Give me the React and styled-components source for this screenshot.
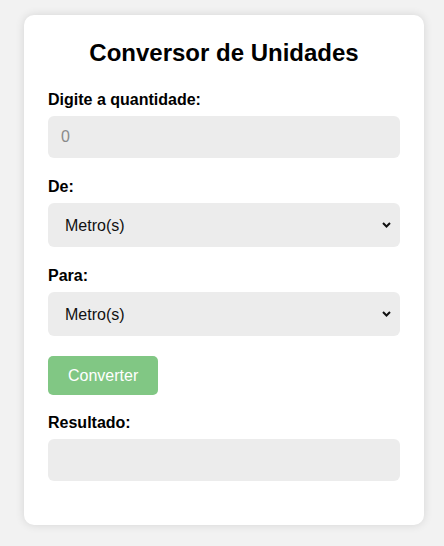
import React, { useState } from "react";
import styled, { createGlobalStyle } from "styled-components";

const GlobalStyle = createGlobalStyle`
	body {
		margin: 0;
		background-color: #f2f2f2;
		font-family: "Liberation Sans", Arial, sans-serif;
	}
`;

const Page = styled.div`
	padding: 15px 20px 20px 24px;
`;

const Card = styled.div`
	width: 400px;
	box-sizing: border-box;
	background-color: #fff;
	border-radius: 10px;
	box-shadow: 0 0 10px rgba(0, 0, 0, 0.12);
	padding: 24px;
	h2 {
		margin: 0 0 25px;
		text-align: center;
		font-size: 24px;
		line-height: 27px;
		font-weight: bold;
		color: #000;
	}
`;

const Group = styled.div`
	margin-bottom: 20px;
`;

const Label = styled.label`
	display: block;
	margin-bottom: 8px;
	font-size: 16px;
	line-height: 17px;
	font-weight: bold;
	color: #000;
`;

const Field = styled.input`
	display: block;
	width: 100%;
	box-sizing: border-box;
	height: 42px;
	padding: 0 13px;
	border: none;
	border-radius: 6px;
	background-color: #ececec;
	font-family: inherit;
	font-size: 16px;
	color: #222;
	outline: none;
	&::placeholder {
		color: #8a8a8a;
	}
`;

const SelectWrap = styled.div`
	position: relative;
	svg {
		position: absolute;
		right: 9px;
		top: 19px;
		pointer-events: none;
	}
`;

const Select = styled.select`
	display: block;
	width: 100%;
	box-sizing: border-box;
	height: 44px;
	padding: 0 30px 0 17px;
	border: none;
	border-radius: 6px;
	background-color: #ececec;
	font-family: inherit;
	font-size: 16px;
	color: #111;
	appearance: none;
	outline: none;
`;

const Button = styled.button`
	display: block;
	height: 39px;
	padding: 0 20px;
	border: none;
	border-radius: 5px;
	background-color: #81c784;
	color: #fff;
	font-family: inherit;
	font-size: 16px;
	cursor: pointer;
	margin-bottom: 19px;
`;

const Result = styled.div`
	height: 42px;
	border-radius: 6px;
	background-color: #ececec;
	padding: 0 13px;
	display: flex;
	align-items: center;
	font-size: 16px;
`;

const units = [
	"Metro(s)",
	"Quilômetro(s)",
	"Centímetro(s)",
	"Milímetro(s)",
];

function Chevron() {
	return (
		<svg width="9" height="6" viewBox="0 0 9 6">
			<path
				d="M1 1 L4.5 4.5 L8 1"
				fill="none"
				stroke="#111"
				strokeWidth="2"
			/>
		</svg>
	);
}

function UnitSelect({ value, onChange }) {
	return (
		<SelectWrap>
			<Select value={value} onChange={(e) => onChange(e.target.value)}>
				{units.map((u) => (
					<option key={u} value={u}>
						{u}
					</option>
				))}
			</Select>
			<Chevron />
		</SelectWrap>
	);
}

export default function App() {
	const [from, setFrom] = useState("Metro(s)");
	const [to, setTo] = useState("Metro(s)");
	return (
		<Page>
			<GlobalStyle />
			<Card>
				<h2>Conversor de Unidades</h2>
				<Group>
					<Label>Digite a quantidade:</Label>
					<Field type="number" placeholder="0" />
				</Group>
				<Group>
					<Label>De:</Label>
					<UnitSelect value={from} onChange={setFrom} />
				</Group>
				<Group>
					<Label>Para:</Label>
					<UnitSelect value={to} onChange={setTo} />
				</Group>
				<Button>Converter</Button>
				<Group>
					<Label>Resultado:</Label>
					<Result />
				</Group>
			</Card>
		</Page>
	);
}
